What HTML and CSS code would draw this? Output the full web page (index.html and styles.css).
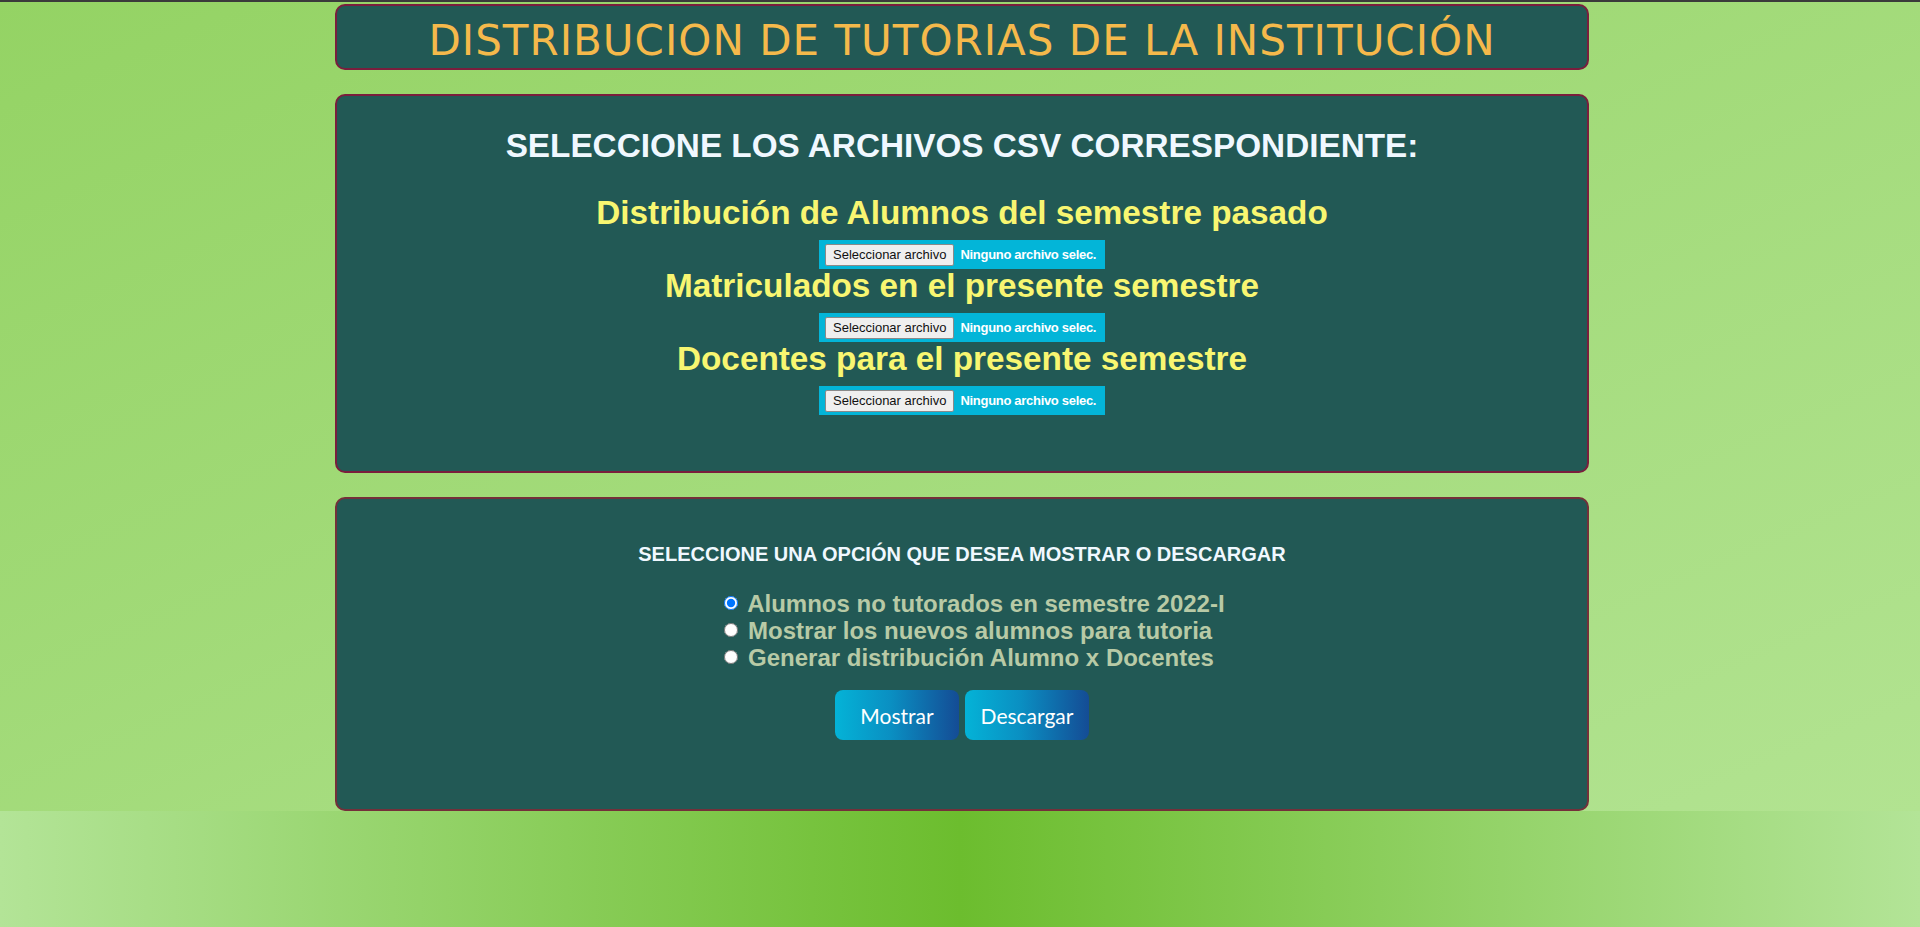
FILE: index.html
```html
<!DOCTYPE html>
<html lang="es">
<head>
<meta charset="utf-8">
<title>Distribución de tutorías</title>
<link rel="stylesheet" href="styles.css">
</head>
<body>
<div class="topbar"></div>
<main class="page">
  <header class="card title-card">
    <h1 class="title">DISTRIBUCION DE TUTORIAS DE LA INSTITUCIÓN</h1>
  </header>

  <section class="card files-card">
    <h2 class="files-title">SELECCIONE LOS ARCHIVOS CSV CORRESPONDIENTE:</h2>
    <div class="file-group">
      <h3 class="file-label">Distribución de Alumnos del semestre pasado</h3>
      <div class="file-box"><button class="file-btn" type="button">Seleccionar archivo</button><span class="file-name">Ninguno archivo selec.</span></div>
    </div>
    <div class="file-group">
      <h3 class="file-label">Matriculados en el presente semestre</h3>
      <div class="file-box"><button class="file-btn" type="button">Seleccionar archivo</button><span class="file-name">Ninguno archivo selec.</span></div>
    </div>
    <div class="file-group">
      <h3 class="file-label">Docentes para el presente semestre</h3>
      <div class="file-box"><button class="file-btn" type="button">Seleccionar archivo</button><span class="file-name">Ninguno archivo selec.</span></div>
    </div>
  </section>

  <section class="card options-card">
    <h3 class="options-title">SELECCIONE UNA OPCIÓN QUE DESEA MOSTRAR O DESCARGAR</h3>
    <div class="options">
      <label class="option"><input type="radio" name="opcion" checked> Alumnos no tutorados en semestre 2022-I</label>
      <label class="option"><input type="radio" name="opcion"> Mostrar los nuevos alumnos para tutoria</label>
      <label class="option"><input type="radio" name="opcion"> Generar distribución Alumno x Docentes</label>
    </div>
    <div class="actions">
      <button class="action-btn" type="button">Mostrar</button>
      <button class="action-btn" type="button">Descargar</button>
    </div>
  </section>
</main>
</body>
</html>
```
FILE: styles.css
```css
html {
  min-height: 100%;
  background: linear-gradient(to right, #b3e497 0%, #6cbd2e 50%, #b3e497 100%);
}

body {
  margin: 0;
  background: linear-gradient(to bottom right, #94d364, #b2e391);
  font-family: "Liberation Sans", Arial, sans-serif;
}

.topbar {
  height: 2px;
  background: #3b3b3b;
}

.page {
  display: flex;
  flex-direction: column;
  align-items: center;
  gap: 24px;
  padding-top: 2px;
  padding-left: 4px;
}

.card {
  box-sizing: border-box;
  width: 1254px;
  background: #225955;
  border: 2px solid #7a1e3d;
  border-radius: 10px;
  text-align: center;
}

.title-card {
  height: 66px;
  padding-top: 11px;
}

.title {
  margin: 0;
  font-family: "DejaVu Sans", sans-serif;
  font-weight: normal;
  font-size: 42px;
  line-height: 48px;
  letter-spacing: 1px;
  color: #f5b94b;
}

.files-card {
  height: 379px;
  padding-top: 33px;
}

.files-title {
  margin: 0 0 33px;
  font-size: 33.3px;
  line-height: 34px;
  font-weight: bold;
  color: #f0f8ff;
}

.file-group {
  display: flex;
  flex-direction: column;
  align-items: center;
}

.file-label {
  margin: 0 0 10px;
  font-size: 33.3px;
  line-height: 34px;
  font-weight: bold;
  color: #f8f671;
}

.file-box {
  box-sizing: border-box;
  display: flex;
  align-items: center;
  width: 286px;
  height: 29px;
  padding: 0 6px;
  gap: 6px;
  background: #03b5d8;
}

.file-btn {
  height: 22px;
  padding: 0 7px;
  font-family: "Liberation Sans", Arial, sans-serif;
  font-size: 13px;
  color: #111;
  background: #efefef;
  border: 1px solid #8a8a8a;
  border-radius: 2px;
}

.file-name {
  font-size: 13px;
  font-weight: bold;
  color: #ffffff;
  letter-spacing: -0.3px;
  white-space: nowrap;
}

.options-card {
  height: 314px;
  padding-top: 43px;
  border-color: #74303a;
}

.options-title {
  margin: 0 0 24px;
  font-size: 20px;
  line-height: 24px;
  font-weight: bold;
  color: #f0f8ff;
}

.options {
  width: fit-content;
  margin: 0 auto;
  padding-left: 20px;
  text-align: left;
}

.option {
  display: block;
  font-size: 24px;
  line-height: 27px;
  font-weight: bold;
  color: #b8caa6;
}

.option input {
  width: 14px;
  height: 14px;
  margin: 0 3px 0 5px;
  vertical-align: 2px;
}

.actions {
  display: flex;
  justify-content: center;
  gap: 6px;
  margin-top: 19px;
}

.action-btn {
  width: 124px;
  height: 50px;
  border: none;
  border-radius: 8px;
  background: linear-gradient(to right, #04b3d7 0%, #0a8fc2 45%, #144c95 100%);
  color: #ffffff;
  font-family: Lato, "Open Sans", sans-serif;
  font-size: 21px;
}
```
